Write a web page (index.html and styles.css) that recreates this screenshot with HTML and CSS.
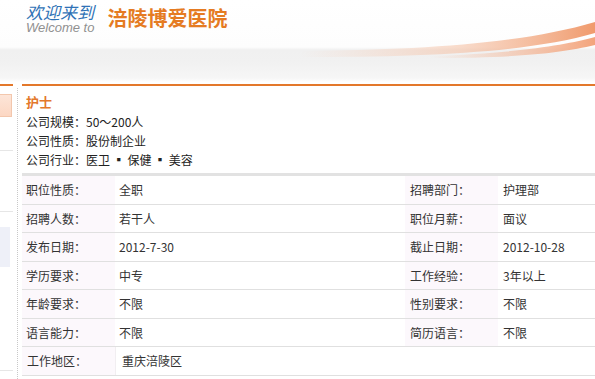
FILE: index.html
```html
<!DOCTYPE html>
<html lang="zh-CN">
<head>
<meta charset="utf-8">
<title>涪陵博爱医院 - 护士</title>
<link rel="stylesheet" href="styles.css">
</head>
<body>
<div class="header">
  <svg class="swoosh" width="595" height="84" viewBox="0 0 595 84" aria-hidden="true">
    <defs>
      <linearGradient id="sw1" x1="0" y1="0" x2="1" y2="0">
        <stop offset="0" stop-color="#f6c8b0" stop-opacity="0"/>
        <stop offset="0.55" stop-color="#f5c2a6" stop-opacity="0.6"/>
        <stop offset="1" stop-color="#f09a6c"/>
      </linearGradient>
      <linearGradient id="sw2" x1="0" y1="0" x2="1" y2="0">
        <stop offset="0" stop-color="#f4b898" stop-opacity="0"/>
        <stop offset="1" stop-color="#f3a47c"/>
      </linearGradient>
    </defs>
    <path d="M300,51 C420,50 520,44 595,22 L595,33 C530,52 430,57 300,57 Z" fill="url(#sw1)"/>
    <path d="M430,56 C520,53 565,45 595,37 L595,45 C560,53 520,58 430,58 Z" fill="url(#sw2)"/>
  </svg>
  <div class="welcome">
    <div class="welcome-cn">欢迎来到</div>
    <div class="welcome-en">Welcome to</div>
  </div>
  <div class="hospital">涪陵博爱医院</div>
</div>

<div class="page">
  <div class="side">
    <div class="side-top"></div>
    <div class="side-tab"></div>
    <div class="side-line first"></div>
    <div class="side-line second"></div>
    <div class="side-soft"></div>
    <div class="side-line third"></div>
  </div>
  <div class="rule"></div>
  <div class="main">
    <div class="info">
      <div class="job-title">护士</div>
      <div class="info-line">公司规模：50～200人</div>
      <div class="info-line">公司性质：股份制企业</div>
      <div class="info-line">公司行业：医卫 ▪ 保健 ▪ 美容</div>
    </div>
    <div class="detail">
      <div class="row">
        <div class="label">职位性质：</div><div class="value">全职</div>
        <div class="label right">招聘部门：</div><div class="value right">护理部</div>
      </div>
      <div class="row">
        <div class="label">招聘人数：</div><div class="value">若干人</div>
        <div class="label right">职位月薪：</div><div class="value right">面议</div>
      </div>
      <div class="row">
        <div class="label">发布日期：</div><div class="value">2012-7-30</div>
        <div class="label right">截止日期：</div><div class="value right">2012-10-28</div>
      </div>
      <div class="row">
        <div class="label">学历要求：</div><div class="value">中专</div>
        <div class="label right">工作经验：</div><div class="value right">3年以上</div>
      </div>
      <div class="row">
        <div class="label">年龄要求：</div><div class="value">不限</div>
        <div class="label right">性别要求：</div><div class="value right">不限</div>
      </div>
      <div class="row">
        <div class="label">语言能力：</div><div class="value">不限</div>
        <div class="label right">简历语言：</div><div class="value right">不限</div>
      </div>
      <div class="row wide">
        <div class="label">工作地区：</div><div class="value">重庆涪陵区</div>
      </div>
    </div>
  </div>
</div>
</body>
</html>
```

FILE: styles.css
```css
html, body {
  margin: 0;
  padding: 0;
  background: #fff;
}

body {
  width: 595px;
  height: 379px;
  overflow: hidden;
  font-family: "Noto Sans CJK SC", "Liberation Sans", sans-serif;
  font-size: 12px;
  color: #333;
}

/* ---------- header banner ---------- */
.header {
  position: relative;
  height: 84px;
  background: linear-gradient(to bottom,
    #ffffff 0, #fdfdfd 47px, #f0f0f0 50px, #f1f1f1 62px, #f6f6f6 78px, #ffffff 82px);
  display: flex;
  align-items: flex-start;
}

.swoosh {
  position: absolute;
  left: 0;
  top: 0;
}

.welcome {
  position: relative;
  margin-left: 26px;
  padding-top: 2px;
}

.welcome-cn {
  font-style: italic;
  font-size: 17px;
  line-height: 19px;
  color: #2f72b6;
}

.welcome-en {
  font-family: "Liberation Sans", sans-serif;
  font-style: italic;
  font-size: 13px;
  line-height: 14px;
  color: #909090;
}

.hospital {
  position: relative;
  margin-left: 13px;
  margin-top: 6px;
  font-size: 20px;
  line-height: 24px;
  font-weight: bold;
  color: #e57b22;
}

/* ---------- body area ---------- */
.page {
  display: flex;
  height: 295px;
}

.side {
  width: 13px;
  display: flex;
  flex-direction: column;
}

.side-top {
  height: 2px;
  background: #e3782b;
}

.side-tab {
  margin-top: 8px;
  height: 21px;
  width: 11px;
  border: 1px solid #f3c7ad;
  border-left: none;
  background: linear-gradient(to bottom, #fde5d8, #fcd7c3);
}

.side-line {
  height: 1px;
  background: #e6e6e6;
}

.side-line.first { margin-top: 33px; }
.side-line.second { margin-top: 60px; }
.side-line.third { margin-top: 103px; }

.side-soft {
  margin-top: 15px;
  height: 40px;
  width: 10px;
  background: #eef0f8;
}

.rule {
  width: 9px;
  display: flex;
  justify-content: center;
  padding-top: 4px;
}

.rule::before {
  content: "";
  display: block;
  height: 100%;
  border-left: 1px dotted #c8c8c8;
}

.main {
  flex: 1;
  border-top: 2px solid #e3782b;
  min-width: 0;
}

.info {
  padding: 6px 0 4px 4px;
}

.job-title {
  font-size: 13px;
  line-height: 20px;
  font-weight: bold;
  color: #e3782b;
}

.info-line {
  line-height: 19px;
  color: #222;
}

/* ---------- detail grid ---------- */
.detail {
  border-top: 3px solid #e2e2e2;
}

.row {
  display: grid;
  grid-template-columns: 93px 290px 93px 1fr;
  height: 28.5px;
  box-sizing: border-box;
  border-bottom: 1px solid #e0e0e0;
}

.row.wide {
  grid-template-columns: 93px 1fr;
}

.label,
.value {
  display: flex;
  align-items: center;
  padding-left: 4px;
  white-space: nowrap;
}

.label {
  background: #fcf8fc;
}

.label.right,
.value.right {
  padding-left: 5px;
}

.value {
  background: #fff;
}

.row.wide .label { padding-left: 5px; }
.row.wide .value { padding-left: 6px; border-left: 1px solid #f1eef1; }
```
